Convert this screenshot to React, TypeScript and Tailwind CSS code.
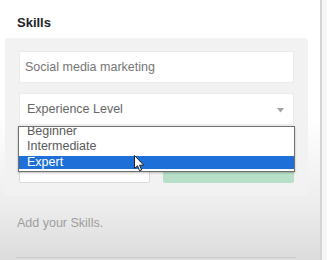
import React from "react";

export default function App() {
  return (
    <div
      className="w-[327px] h-[260px] flex overflow-hidden"
      style={{ fontFamily: '"Liberation Sans", Arial, sans-serif' }}
    >
      <div className="w-[320px] h-full bg-linear-to-b from-white from-45% via-[#ececec] via-80% to-[#dcdcdc] flex flex-col">
        <h3 className="pt-[15px] pl-[17px] text-[13px] leading-[16px] font-bold text-[#222]">Skills</h3>
        <div className="mt-[7px] ml-[5px] w-[303px] bg-[#f2f2f2] rounded-[3px] px-[14px] pt-[13px] pb-[13px]">
          <div className="h-[32px] bg-white border border-[#ebebeb] flex items-center pl-[5px] text-[12.5px] text-[#757575]">
            Social media marketing
          </div>
          <div className="relative mt-[10px] h-[32px] bg-white border border-[#ebebeb] flex items-center justify-between pl-[7px] pr-[9px] text-[12.5px] text-[#666]">
            <span>Experience Level</span>
            <svg width="7" height="5" viewBox="0 0 7 5" className="mt-[2px]">
              <path d="M0 0 L7 0 L3.5 4.5 Z" fill="#a3a3a3" />
            </svg>
            <div className="absolute top-[31.5px] left-[-2px] right-[-2px] z-10 border border-[#6e6e6e] bg-white shadow-[0_1px_2px_rgba(0,0,0,0.25)]">
              <div className="h-[44px] overflow-hidden">
                <div className="-mt-[3px] text-[12.5px]">
                  <div className="h-[15px] leading-[15px] pl-[8px] text-[#5a5a5a]">Beginner</div>
                  <div className="h-[15px] leading-[15px] pl-[8px] text-[#5a5a5a]">Intermediate</div>
                  <div className="mt-[2px] h-[13px] leading-[13px] pl-[8px] text-white bg-[#1f6fd8]">Expert</div>
                </div>
              </div>
              <svg
                width="11"
                height="17"
                viewBox="0 0 11 17"
                className="absolute left-[115px] top-[28px]"
              >
                <path
                  d="M0.5 0.5 L0.5 13.5 L3.5 10.8 L5.6 15.8 L7.6 15 L5.6 10.2 L9.8 10.2 Z"
                  fill="white"
                  stroke="#222"
                  strokeWidth="1"
                  strokeLinejoin="round"
                />
              </svg>
            </div>
          </div>
          <div className="mt-[26px] h-[32px] flex gap-[13px]">
            <div className="w-[131px] bg-white border border-[#dadada] rounded-[2px]" />
            <div className="flex-1 bg-[#b8e0c9] rounded-[2px]" />
          </div>
        </div>
        <p className="mt-[19px] pl-[17px] text-[12.5px] leading-[16px] text-[#9d9d9d]">Add your Skills.</p>
        <div className="mt-[26px] ml-[16px] w-[280px] h-px bg-[#cdcdcd]" />
      </div>
      <div className="w-[2px] h-full bg-[#d4d4d4]" />
      <div className="flex-1 h-full bg-[#f7f7f7]" />
    </div>
  );
}
